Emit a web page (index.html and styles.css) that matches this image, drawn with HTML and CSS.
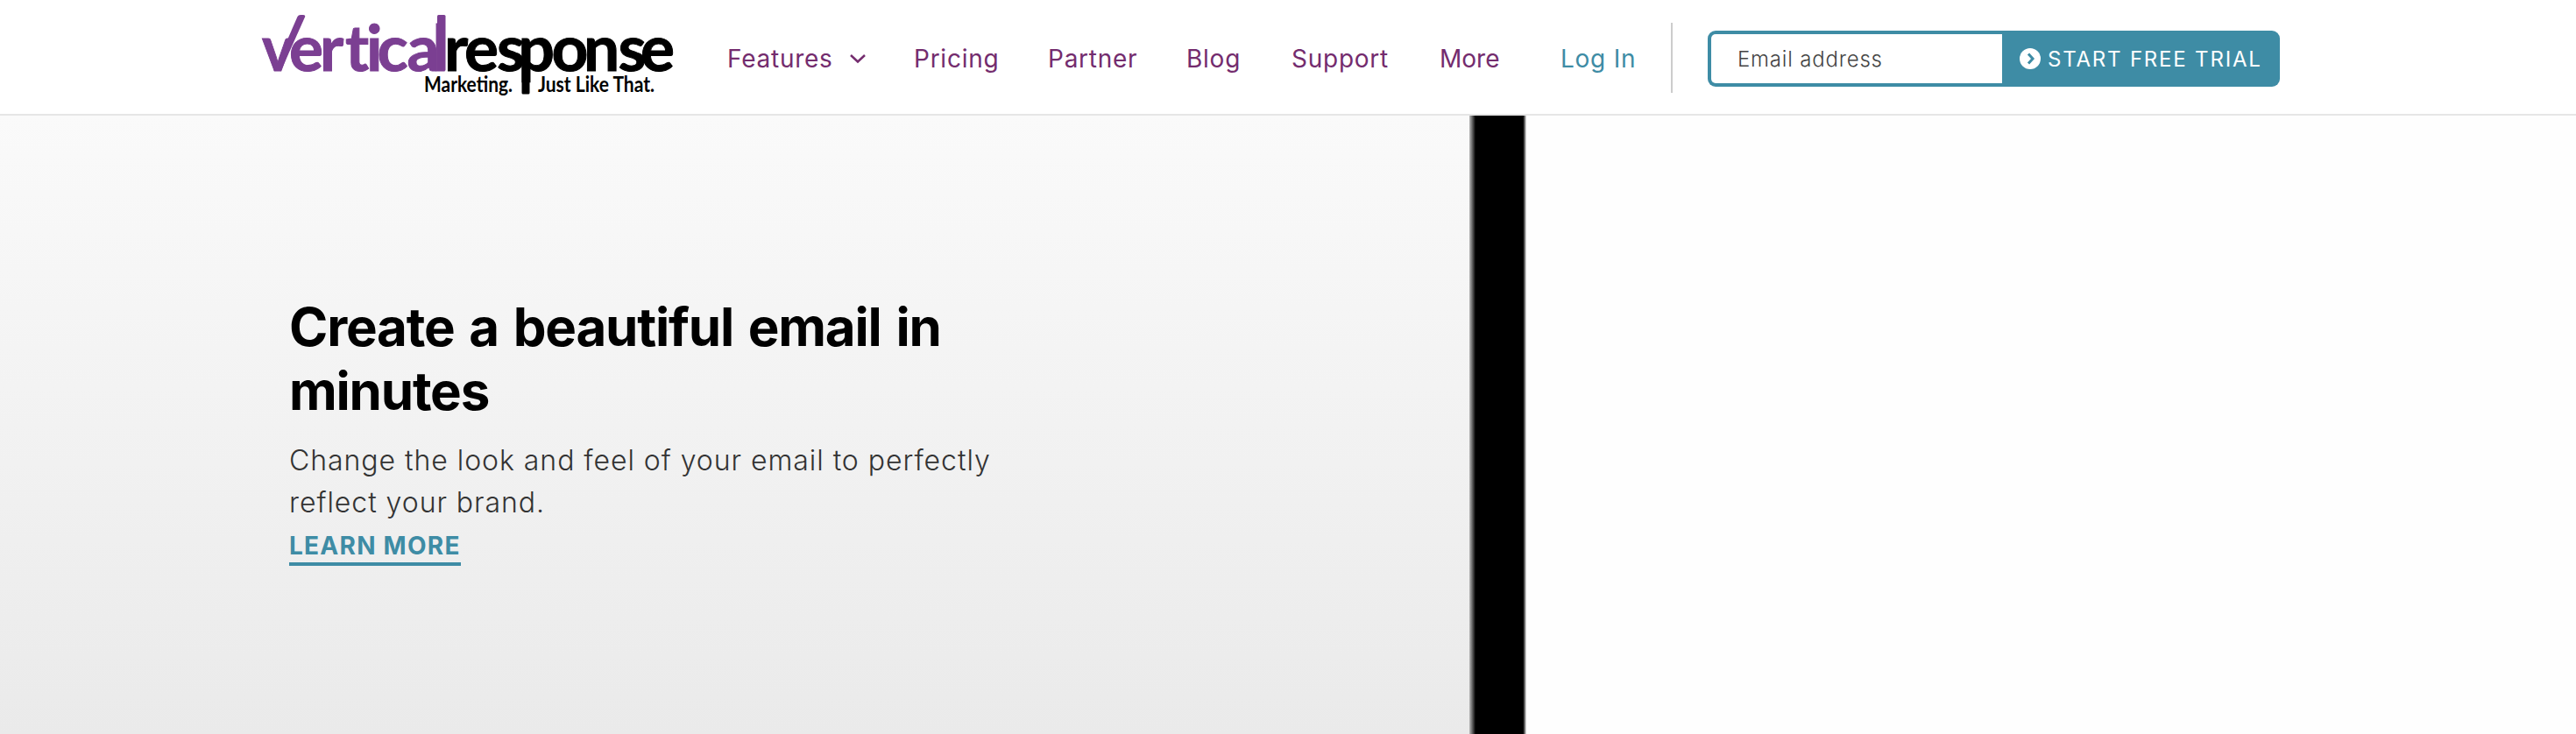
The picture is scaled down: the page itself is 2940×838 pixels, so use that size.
FILE: index.html
```html
<!DOCTYPE html>
<html lang="en">
<head>
<meta charset="utf-8">
<title>VerticalResponse</title>
<link rel="stylesheet" href="styles.css">
</head>
<body>
<header class="header">
  <a class="logo" aria-label="VerticalResponse">
    <svg width="480" height="130" viewBox="290 0 480 130">
      <g class="logo-name">
        <text class="purple" x="299" y="80.500" textLength="36" lengthAdjust="spacingAndGlyphs">v</text>
        <text class="purple" y="80.500" x="330 365 394 418 430.500 464.500 493.500">ertical</text>
        <text y="80.500" x="507 530 567 591.500 629.500 666 705.500 731">response</text>
      </g>
      <path class="check" d="M312.500 81L339.500 19Q340.500 17 343 17L346 17Q349 17 348 19.500L320.500 81Z"/>
      <rect class="stem" x="499" y="17" width="9.500" height="64" rx="1.500"/>
      <rect x="595.500" y="45" width="9" height="62.500" rx="1.500"/>
      <g class="logo-tag">
        <text x="484" y="105" textLength="101" lengthAdjust="spacingAndGlyphs">Marketing.</text>
        <text x="614" y="105" textLength="133" lengthAdjust="spacingAndGlyphs">Just Like That.</text>
      </g>
    </svg>
  </a>
  <nav class="nav">
    <a class="features">Features <svg width="20" height="12" viewBox="0 0 20 12"><path d="M2 2L10 9.500L18 2"/></svg></a>
    <a class="pricing">Pricing</a>
    <a class="partner">Partner</a>
    <a class="blog">Blog</a>
    <a class="support">Support</a>
    <a class="more">More</a>
    <a class="login">Log In</a>
  </nav>
  <form class="trial">
    <input class="email" type="email" placeholder="Email address">
    <button class="start" type="button"><svg width="24" height="24" viewBox="0 0 24 24"><circle cx="12" cy="12" r="12"/><path d="M10 6.500L15 12L10 17.500"/></svg><span>START FREE TRIAL</span></button>
  </form>
</header>
<main class="hero">
  <section class="copy">
    <h1>Create a beautiful email in<br>minutes</h1>
    <p>Change the look and feel of your email to perfectly<br>reflect your brand.</p>
    <a class="learn">LEARN MORE</a>
  </section>
  <div class="device"></div>
  <div class="screen"></div>
</main>
</body>
</html>
```
FILE: styles.css
```css
* { box-sizing: border-box; }
body { margin: 0; font-family: Inter, "Liberation Sans", sans-serif; background: #fff; overflow: hidden; }
.header { display: flex; align-items: center; height: 132px; padding-left: 290px; border-bottom: 2px solid #e6e6e6; background: #fff; }
.logo { display: block; width: 480px; height: 130px; flex: none; }
.logo svg { display: block; }
.logo-name { font: 700 73px Lato, sans-serif; stroke: #000; stroke-width: 1; }
.purple, .stem, .check { fill: #7b3f92; }
.purple { stroke: #7b3f92; }
.logo-tag { font: 700 24px Lato, sans-serif; }
.nav { display: flex; align-items: center; height: 80px; width: 1139px; padding: 2px 0 0 60px; border-right: 2px solid #ccc; margin-top: 2px; font-size: 28px; line-height: 36px; letter-spacing: 0.75px; color: #742c6e; white-space: nowrap; flex: none; }
.nav a { flex: none; }
.features { width: 213px; display: flex; align-items: center; gap: 18px; }
.features svg { fill: none; stroke: #742c6e; stroke-width: 2.5; }
.pricing { width: 153px; }
.partner { width: 158px; }
.blog { width: 120px; }
.support { width: 169px; }
.more { width: 138px; letter-spacing: 0; }
.login { color: #3e8ca5; }
.trial { display: flex; width: 653px; height: 64px; margin: 4px 0 0 40px; padding: 4px; background: #3e8ca5; border-radius: 9px; flex: none; }
.email { width: 332px; height: 56px; border: 0; border-radius: 5px 0 0 5px; padding: 0 0 0 30px; font: 300 24px Inter, sans-serif; letter-spacing: 0.8px; background: #fff; }
.email::placeholder { color: #444; opacity: 1; }
.start { display: flex; align-items: center; gap: 8px; border: 0; padding: 0 0 0 20px; background: none; color: #fff; font: 400 24px Inter, sans-serif; letter-spacing: 1.8px; white-space: nowrap; }
.start circle { fill: #fff; }
.start path { fill: none; stroke: #3e8ca5; stroke-width: 3; }
.hero { display: flex; height: 706px; }
.copy { width: 1677px; padding: 205px 0 0 330px; background: linear-gradient(#fafafa, #eaeaea); flex: none; }
.device { width: 65px; background: linear-gradient(90deg, #bbb 0, #000 7px, #000 61px, #222 62px, #eee 65px); flex: none; }
.screen { flex: 1; background: #fefefe; }
h1 { margin: 0; font-size: 60px; line-height: 73px; font-weight: 700; letter-spacing: -1.2px; word-spacing: 3.8px; color: #000; white-space: nowrap; }
p { margin: 19px 0 0; font-size: 32px; line-height: 48px; font-weight: 300; letter-spacing: 0.95px; color: #333; white-space: nowrap; }
.learn { display: inline-block; height: 46px; width: 196px; margin-top: 2px; font-size: 28px; line-height: 46px; font-weight: 700; letter-spacing: 1.25px; color: #3e8ca5; border-bottom: 4px solid #3e8ca5; white-space: nowrap; }
```
